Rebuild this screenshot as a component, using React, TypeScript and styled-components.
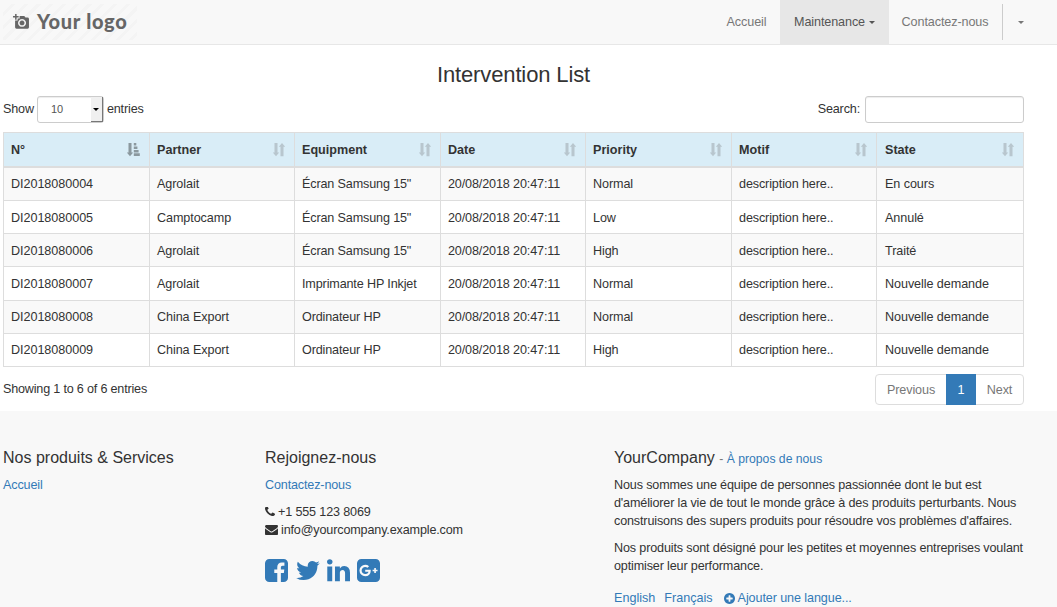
import React from 'react';
import styled, { createGlobalStyle, css } from 'styled-components';

const GlobalStyle = createGlobalStyle`
  *, *::before, *::after { box-sizing: border-box; }
  html, body { margin: 0; height: 607px; overflow: hidden; }
  body {
    background: #fff;
    color: #333;
    font-family: "Liberation Sans", Arial, sans-serif;
    font-size: 12.6px;
    line-height: 18px;
  }
  a { color: #337ab7; text-decoration: none; }
`;

const Page = styled.div`
  width: 1057px;
  height: 607px;
  overflow: hidden;
`;

const Navbar = styled.header`
  display: flex;
  justify-content: space-between;
  height: 45px;
  background: #f8f8f8;
  border-bottom: 1px solid #e7e7e7;
`;

const Brand = styled.a`
  display: flex;
  align-items: center;
  width: 134px;
  height: 36px;
  margin: 4px 0 0 3px;
  padding: 0 0 2px 10px;
  gap: 8px;
  color: #666;
  background: repeating-linear-gradient(135deg, #f8f8f8 0 6px, #f4f4f4 6px 9px);
`;

const BrandName = styled.span`
  font: 900 20px/36px Lato, sans-serif;
  letter-spacing: 0.7px;
  color: #666;
  white-space: nowrap;
`;

const Menu = styled.nav`
  display: flex;
  height: 44px;
  padding-right: 19px;
  letter-spacing: -0.1px;
`;

const MenuItem = styled.a<{ $active?: boolean; $width: number }>`
  display: flex;
  align-items: center;
  justify-content: center;
  gap: 4px;
  width: ${(p) => p.$width}px;
  height: 44px;
  color: ${(p) => (p.$active ? '#555' : '#777')};
  background: ${(p) => (p.$active ? '#e7e7e7' : 'transparent')};
`;

const MenuDivider = styled.span`
  width: 1px;
  height: 36px;
  margin: 4px 0 0 1px;
  background: #ccc;
`;

const Caret = styled.span`
  margin-top: 1px;
  border-top: 3px solid currentColor;
  border-left: 3px solid transparent;
  border-right: 3px solid transparent;
`;

const Main = styled.main`
  width: 1027px;
  height: 366px;
  padding: 0 3px;
`;

const Title = styled.h3`
  margin: 0;
  padding-top: 17px;
  font-size: 22px;
  font-weight: 400;
  line-height: 26px;
  letter-spacing: -0.13px;
  text-align: center;
`;

const Controls = styled.div`
  display: flex;
  justify-content: space-between;
  height: 27px;
  margin-top: 8px;
`;

const ControlLabel = styled.label<{ $gap: number }>`
  display: flex;
  gap: ${(p) => p.$gap}px;
  line-height: 27px;
  letter-spacing: -0.15px;
`;

const LengthSelect = styled.span`
  display: flex;
  justify-content: space-between;
  width: 67px;
  height: 27px;
  padding-left: 13px;
  border: 1px solid #ccc;
  border-radius: 3px;
  color: #555;
  font-size: 11px;
  letter-spacing: 0;
  line-height: 25px;
  box-shadow: inset 0 1px 1px rgba(0, 0, 0, 0.075);
`;

const SelectButton = styled.span`
  display: flex;
  align-items: center;
  justify-content: center;
  width: 12px;
  height: 25px;
  color: #000;
  background: #f0f0f0;
  border-right: 1px solid #777;
  border-bottom: 1px solid #777;
`;

const SearchInput = styled.input`
  width: 159px;
  height: 27px;
  padding: 4px 9px;
  border: 1px solid #ccc;
  border-radius: 3px;
  outline: 0;
  box-shadow: inset 0 1px 1px rgba(0, 0, 0, 0.075);
`;

const Table = styled.div`
  width: 1021px;
  margin-top: 9px;
  border-top: 1px solid #ddd;
  border-left: 1px solid #ddd;
`;

const rowLayout = css`
  display: grid;
  grid-template-columns: 146px 145px 146px 145px 146px 145px 147px;
  & > :last-child { padding-left: 8px; }
`;

const HeadRow = styled.div`
  ${rowLayout}
  height: 35px;
  background: #d9edf7;
`;

const BodyRow = styled.div<{ $striped: boolean }>`
  ${rowLayout}
  height: 33.17px;
  background: ${(p) => (p.$striped ? '#f9f9f9' : '#fff')};
`;

const HeadCell = styled.div`
  display: flex;
  justify-content: space-between;
  align-items: center;
  padding: 0 9px 0 7px;
  border-right: 1px solid #ddd;
  border-bottom: 2px solid #ddd;
  font-weight: 700;
`;

const Cell = styled.div<{ $tracking: number }>`
  display: flex;
  align-items: center;
  padding: 0.6px 7px 0;
  border-right: 1px solid #ddd;
  border-bottom: 1px solid #ddd;
  letter-spacing: ${(p) => p.$tracking}px;
  white-space: nowrap;
`;

const TableFooter = styled.div`
  display: flex;
  justify-content: space-between;
  height: 31px;
  margin-top: 7px;
`;

const Info = styled.span`
  padding-top: 6px;
  letter-spacing: -0.19px;
`;

const Pagination = styled.div`
  display: flex;
  width: 149px;
  height: 31px;
  border: 1px solid #ddd;
  border-radius: 4px;
`;

const PageLink = styled.a<{ $active?: boolean; $width: number }>`
  width: ${(p) => p.$width}px;
  height: ${(p) => (p.$active ? 31 : 29)}px;
  margin-top: ${(p) => (p.$active ? -1 : 0)}px;
  line-height: ${(p) => (p.$active ? 33 : 31)}px;
  letter-spacing: -0.1px;
  text-align: center;
  color: ${(p) => (p.$active ? '#fff' : '#777')};
  background: ${(p) => (p.$active ? '#337ab7' : 'transparent')};
`;

const Footer = styled.footer`
  display: grid;
  grid-template-columns: 262px 349px 420px;
  height: 196px;
  padding: 37px 0 0 3px;
  background: #f8f8f8;
  letter-spacing: -0.15px;
`;

const FooterTitle = styled.h4`
  margin: 0 0 8px;
  font-size: 16px;
  font-weight: 400;
  line-height: 20px;
  letter-spacing: 0;
  small { font-size: 12.2px; color: #777; }
`;

const Paragraph = styled.p`
  margin: 0 0 9px;
  white-space: nowrap;
`;

const About = styled.section`
  ${FooterTitle} { margin-bottom: 7px; }
`;

const ContactLine = styled.div<{ $gap: number }>`
  display: flex;
  align-items: center;
  gap: ${(p) => p.$gap}px;
`;

const Social = styled.div`
  display: flex;
  gap: 7px;
  height: 27px;
  margin-top: 20px;
  color: #337ab7;
`;

const Languages = styled.div`
  display: flex;
  align-items: center;
  gap: 9px;
  padding-top: 5px;
  letter-spacing: 0;
  a { display: flex; align-items: center; gap: 3px; }
  a:last-child { margin-left: 2px; letter-spacing: -0.1px; }
`;

const Glyph = styled.svg`
  display: block;
  flex: none;
  fill: currentColor;
  fill-rule: evenodd;
`;

type IconShape = { box: string; w: number; h: number; d: string };

const icons: Record<string, IconShape> = {
  phone: {
    box: '192 256 1408 1408', w: 10, h: 10,
    d: 'M1600 1240q0 27-10 70.5t-21 68.5q-21 50-122 106-94 51-186 51-27 0-53-3.5t-57.5-12.5-47-14.5-55.5-20.5-49-18q-98-35-175-83-127-79-264-216t-216-264q-48-77-83-175-3-9-18-49t-20.5-55.5-14.5-47-12.5-57.5-3.5-53q0-92 51-186 56-101 106-122 25-11 68.5-21t70.5-10q14 0 21 3 18 6 53 76 11 19 30 54t35 63.5 31 53.5q3 4 17.5 25t21.5 35.5 7 28.5q0 20-28.5 50t-62 55-62 53-28.5 46q0 9 5 22.5t8.5 20.5 14 24 11.5 19q76 137 174 235t235 174q2 1 19 11.5t24 14 20.5 8.5 22.5 5q18 0 46-28.5t53-62 55-62 50-28.5q14 0 28.5 7t35.5 21.5 25 17.5q25 15 53.5 31t63.5 35 54 30q70 35 76 53 3 7 3 21z',
  },
  envelope: {
    box: '0 256 1792 1408', w: 13, h: 10.2,
    d: 'M1792 710v794q0 66-47 113t-113 47h-1472q-66 0-113-47t-47-113v-794q44 49 101 87 362 246 497 345 57 42 92.5 65.5t94.5 48 110 24.5h2q51 0 110-24.5t94.5-48 92.5-65.5q170-123 498-345 57-39 100-87zm0-294q0 79-49 151t-122 123q-376 261-468 325-10 7-42.5 31t-54 38.5-52 32.5-57.5 27-50 9h-2q-23 0-50-9t-57.5-27-52-32.5-54-38.5-42.5-31q-91-64-262-182.5t-205-142.5q-62-42-117-115.5t-55-136.5q0-78 41.5-130t118.5-52h1472q65 0 112.5 47t47.5 113z',
  },
  facebook: {
    box: '128 128 1536 1536', w: 23, h: 23,
    d: 'M1376 128q119 0 203.5 84.5t84.5 203.5v960q0 119-84.5 203.5t-203.5 84.5h-188v-595h199l30-232h-229v-148q0-56 23.5-84t91.5-28l122-1v-207q-63-9-178-9-136 0-217.5 80t-81.5 226v171h-200v232h200v595h-532q-119 0-203.5-84.5t-84.5-203.5v-960q0-119 84.5-203.5t203.5-84.5h960z',
  },
  twitter: {
    box: '42 128 1642 1536', w: 25, h: 23,
    d: 'M1684 408q-67 98-162 167 1 14 1 42 0 130-38 259.5t-115.5 248.5-184.5 210.5-258 146-323 54.5q-271 0-496-145 35 4 78 4 225 0 401-138-105-2-188-64.5t-114-159.5q33 5 61 5 43 0 85-11-112-23-185.5-111.5t-73.5-205.5v-4q68 38 146 41-66-44-105-115t-39-154q0-88 44-163 121 149 294.5 238.5t371.5 99.5q-8-38-8-74 0-134 94.5-228.5t228.5-94.5q140 0 236 102 109-21 205-78-37 115-142 178 93-10 186-50z',
  },
  linkedin: {
    box: '128 128 1536 1536', w: 23, h: 23,
    d: 'M477 625v991h-330v-991h330zm21-306q1 73-50.5 122t-135.5 49h-2q-82 0-132-49t-50-122q0-74 51.5-122.5t134.5-48.5 133 48.5 51 122.5zm1166 729v568h-329v-530q0-105-40.5-164.5t-126.5-59.5q-63 0-105.5 34.5t-63.5 85.5q-11 30-11 81v553h-329q2-399 2-647t-1-296l-1-48h329v144h-2q20-32 41-56t56.5-52 87-43.5 114.5-15.5q171 0 275 113.5t104 332.5z',
  },
  google: {
    box: '128 128 1536 1536', w: 23, h: 23,
    d: 'M1045 905q0-26-6-64h-362v132h217q-3 24-16.5 50t-37.5 53-66.5 44.5-96.5 17.5q-99 0-169-71t-70-171 70-171 169-71q92 0 153 59l104-101q-108-100-257-100-160 0-272 112.5t-112 271.5 112 271.5 272 112.5q165 0 266.5-105t101.5-270zm345 46h109v-110h-109v-110h-110v110h-110v110h110v110h110v-110zm274-535v960q0 119-84.5 203.5t-203.5 84.5h-960q-119 0-203.5-84.5t-84.5-203.5v-960q0-119 84.5-203.5t203.5-84.5h960q119 0 203.5 84.5t84.5 203.5z',
  },
  plus: {
    box: '128 128 1536 1536', w: 11, h: 11,
    d: 'M1344 960v-128q0-26-19-45t-45-19h-256v-256q0-26-19-45t-45-19h-128q-26 0-45 19t-19 45v256h-256q-26 0-45 19t-19 45v128q0 26 19 45t45 19h256v256q0 26 19 45t45 19h128q26 0 45-19t19-45v-256h256q26 0 45-19t19-45zm320-64q0 209-103 385.5t-279.5 279.5-385.5 103-385.5-103-279.5-279.5-103-385.5 103-385.5 279.5-279.5 385.5-103 385.5 103 279.5 279.5 103 385.5z',
  },
  camera: {
    box: '0 0 17 16', w: 16, h: 15,
    d: 'M2.2 0h1.6v2.2H6v1.6H3.8V6H2.200V3.800H0V2.200H2.200zM7 2h5l1.300 1.700H15.500Q17 3.700 17 5.200V14.200Q17 15.700 15.500 15.700H3.700Q2.200 15.700 2.200 14.200V7H4.900V4.700H7zM9.600 5.300a4.200 4.200 0 1 0 .01 0zM9.600 6.900a2.600 2.600 0 1 1-.01 0z',
  },
  sort: {
    box: '0 0 12 14', w: 12, h: 14,
    d: 'M1.500 0h3v9.500h1.700L3 13.200-.2 9.500h1.700zM7.500 13.200V3.700H5.800L9 0l3.200 3.700h-1.700v9.500z',
  },
  sortAsc: {
    box: '0 0 13 14', w: 13, h: 14,
    d: 'M1.500 0h3v9.500h1.700L3 13.200-.2 9.500h1.700zM6.800 0h2.500v2.500H6.800zM6.800 3.400h3.600v2.600H6.800zM6.800 6.900h4.800v2.500H6.800zM6.800 10.300h6v2.600h-6z',
  },
};

const Icon = ({ name }: { name: string }) => {
  const { box, w, h, d } = icons[name];
  return (
    <Glyph viewBox={box} width={w} height={h} aria-hidden="true">
      <path d={d} />
    </Glyph>
  );
};

const SortMark = styled.span<{ $sorted: boolean }>`
  color: ${(p) => (p.$sorted ? '#8b989e' : '#b8c6ce')};
`;

const columns = ['N°', 'Partner', 'Equipment', 'Date', 'Priority', 'Motif', 'State'];
const tracking = [-0.05, -0.08, -0.14, -0.13, -0.1, -0.12, -0.07];
const date = '20/08/2018 20:47:11';
const motif = 'description here..';
const rows = [
  ['DI2018080004', 'Agrolait', 'Écran Samsung 15"', date, 'Normal', motif, 'En cours'],
  ['DI2018080005', 'Camptocamp', 'Écran Samsung 15"', date, 'Low', motif, 'Annulé'],
  ['DI2018080006', 'Agrolait', 'Écran Samsung 15"', date, 'High', motif, 'Traité'],
  ['DI2018080007', 'Agrolait', 'Imprimante HP Inkjet', date, 'Normal', motif, 'Nouvelle demande'],
  ['DI2018080008', 'China Export', 'Ordinateur HP', date, 'Normal', motif, 'Nouvelle demande'],
  ['DI2018080009', 'China Export', 'Ordinateur HP', date, 'High', motif, 'Nouvelle demande'],
];

export default function App() {
  return (
    <Page>
      <GlobalStyle />
      <Navbar>
        <Brand>
          <Icon name="camera" />
          <BrandName>Your logo</BrandName>
        </Brand>
        <Menu>
          <MenuItem $width={67}>Accueil</MenuItem>
          <MenuItem $width={109} $active>Maintenance <Caret /></MenuItem>
          <MenuItem $width={112}>Contactez-nous</MenuItem>
          <MenuDivider />
          <MenuItem $width={35}><Caret /></MenuItem>
        </Menu>
      </Navbar>
      <Main>
        <Title>Intervention List</Title>
        <Controls>
          <ControlLabel $gap={3}>
            Show
            <LengthSelect>10<SelectButton><Caret /></SelectButton></LengthSelect>
            entries
          </ControlLabel>
          <ControlLabel $gap={5}>
            Search:
            <SearchInput />
          </ControlLabel>
        </Controls>
        <Table role="table">
          <HeadRow role="row">
            {columns.map((name, i) => (
              <HeadCell key={name} role="columnheader">
                {name}
                <SortMark $sorted={i === 0}><Icon name={i === 0 ? 'sortAsc' : 'sort'} /></SortMark>
              </HeadCell>
            ))}
          </HeadRow>
          {rows.map((row, i) => (
            <BodyRow key={row[0]} role="row" $striped={i % 2 === 0}>
              {row.map((value, j) => <Cell key={j} role="cell" $tracking={tracking[j]}>{value}</Cell>)}
            </BodyRow>
          ))}
        </Table>
        <TableFooter>
          <Info>Showing 1 to 6 of 6 entries</Info>
          <Pagination>
            <PageLink $width={70}>Previous</PageLink>
            <PageLink $width={30} $active>1</PageLink>
            <PageLink $width={47}>Next</PageLink>
          </Pagination>
        </TableFooter>
      </Main>
      <Footer>
        <section>
          <FooterTitle>Nos produits &amp; Services</FooterTitle>
          <a>Accueil</a>
        </section>
        <section>
          <FooterTitle>Rejoignez-nous</FooterTitle>
          <Paragraph><a>Contactez-nous</a></Paragraph>
          <ContactLine $gap={3}><Icon name="phone" />+1 555 123 8069</ContactLine>
          <ContactLine $gap={3}><Icon name="envelope" />info@yourcompany.example.com</ContactLine>
          <Social>
            <Icon name="facebook" />
            <Icon name="twitter" />
            <Icon name="linkedin" />
            <Icon name="google" />
          </Social>
        </section>
        <About>
          <FooterTitle>YourCompany <small>- <a>À propos de nous</a></small></FooterTitle>
          <Paragraph>
            Nous sommes une équipe de personnes passionnée dont le but est<br />
            d'améliorer la vie de tout le monde grâce à des produits perturbants. Nous<br />
            construisons des supers produits pour résoudre vos problèmes d'affaires.
          </Paragraph>
          <Paragraph>
            Nos produits sont désigné pour les petites et moyennes entreprises voulant<br />
            optimiser leur performance.
          </Paragraph>
          <Languages>
            <a>English</a>
            <a>Français</a>
            <a><Icon name="plus" />Ajouter une langue...</a>
          </Languages>
        </About>
      </Footer>
    </Page>
  );
}
